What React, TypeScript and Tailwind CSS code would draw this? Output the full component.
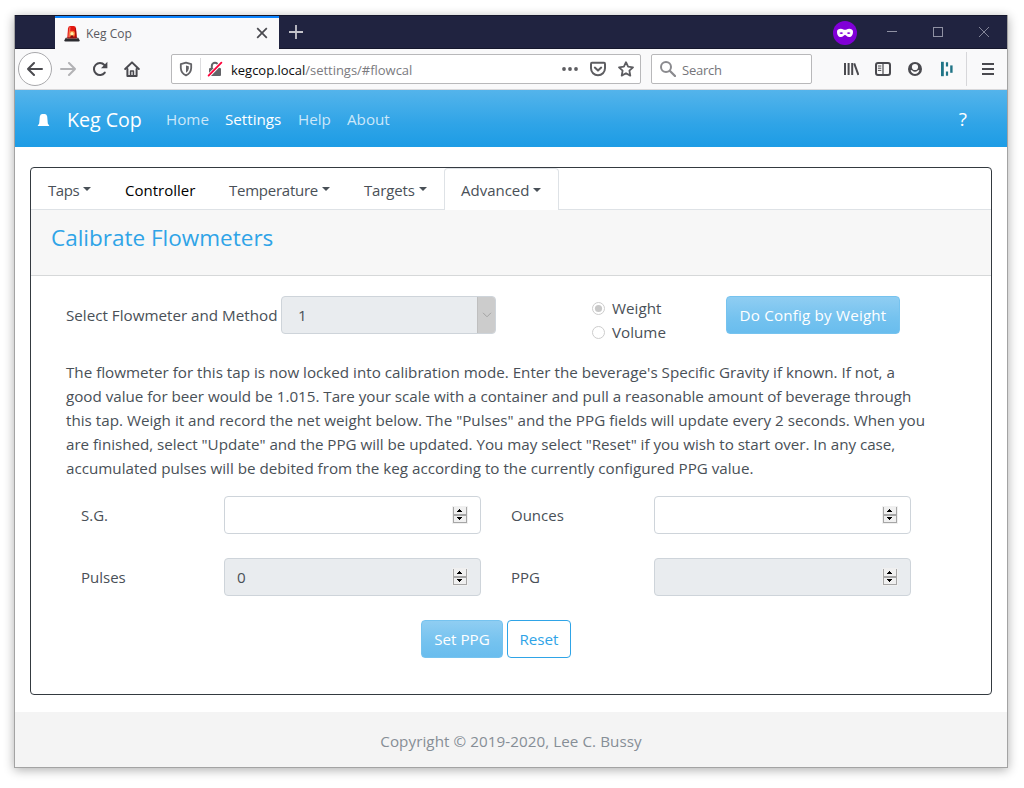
import React from "react";

const ink = "#4a4a4f";

function Siren() {
  return (
    <svg width="16" height="18" viewBox="0 0 16 18">
      <path d="M3.2 14 L4 3.4 Q4.3 1 6.5 1 H9.5 Q11.7 1 12 3.4 L12.8 14 Z" fill="#e3170f" />
      <path d="M4.2 13 L5 3.4 Q5.2 1.8 6.5 1.8 L6 13 Z" fill="#f4695c" />
      <path d="M11 2.4 Q12 3 12.2 6 L12.8 14 H11.2 Z" fill="#a30d0a" />
      <circle cx="8" cy="8.7" r="3" fill="#f9803a" />
      <circle cx="8" cy="8.7" r="1.7" fill="#fff0a8" />
      <path d="M6.2 13.6 L7 10.5 H9 L9.8 13.6 Z" fill="#7c1010" />
      <path d="M1.8 12.8 H14.2 L15.8 15.6 Q15.6 16.6 14.6 16.6 H1.4 Q.4 16.6 .2 15.6 Z" fill="#2c2c30" />
      <path d="M2.6 13 H13.4 L13.8 14 H2.2 Z" fill="#77706f" />
      <path d="M3.6 12.4 H12.4 V13.4 H3.6 Z" fill="#a5120e" />
    </svg>
  );
}

function TitleBar() {
  return (
    <div className="flex h-[34px] bg-[#202340] border-t border-b border-[#15172c]">
      <div className="ml-[40px] flex h-[34px] w-[224px] shrink-0 items-center border-t-2 border-[#0a84ff] bg-[#f9f9fa] pl-[9px] pr-[11px]">
        <Siren />
        <span className="ml-[6px] text-[12px] text-[#5a5a60]">Keg Cop</span>
        <svg className="mb-[2px] ml-auto" width="12" height="12" viewBox="0 0 12 12" stroke="#4a4a4f" strokeWidth="1.7" fill="none">
          <path d="M1.2 1.2 L10.8 10.8 M10.8 1.2 L1.2 10.8" />
        </svg>
      </div>
      <svg className="ml-[10px] mt-[9px]" width="14" height="14" viewBox="0 0 14 14" stroke="#c4c4cb" strokeWidth="1.8">
        <path d="M7 0 V14 M0 7 H14" />
      </svg>
      <div className="ml-auto flex items-center">
        <svg className="mt-[2px]" width="24" height="24" viewBox="0 0 24 24">
          <circle cx="12" cy="12" r="12" fill="#8000d7" />
          <path fillRule="evenodd" fill="#fff" d="M4 10.7 C4 7.6 8.2 7.2 10.4 8.4 Q12 9.2 13.6 8.4 C15.8 7.2 20 7.6 20 10.7 C20 13.8 18.6 16.1 16.2 16.1 C13.8 16.1 13.2 14.1 12 14.1 C10.8 14.1 10.2 16.1 7.8 16.1 C5.4 16.1 4 13.8 4 10.7 Z M6.4 12.1 Q8.3 13.9 10.2 12.1 Q8.3 10.2 6.4 12.1 Z M13.8 12.1 Q15.7 13.9 17.6 12.1 Q15.7 10.2 13.8 12.1 Z" />
        </svg>
        <svg className="ml-[30px]" width="10" height="10" viewBox="0 0 10 10" stroke="#8f91a3">
          <path d="M0 4.5 H10" />
        </svg>
        <svg className="ml-[36px]" width="10" height="10" viewBox="0 0 10 10" stroke="#8f91a3" fill="none">
          <rect x=".5" y=".5" width="9" height="9" />
        </svg>
        <svg className="ml-[36px] mr-[18px]" width="10" height="10" viewBox="0 0 10 10" stroke="#8f91a3" strokeWidth=".9">
          <path d="M0 0 L10 10 M10 0 L0 10" />
        </svg>
      </div>
    </div>
  );
}

function Icon({ children, className = "" }: { children: React.ReactNode; className?: string }) {
  return (
    <svg className={"shrink-0 " + className} width="16" height="16" viewBox="0 0 16 16" fill="none" stroke={ink} strokeWidth="2" strokeLinecap="round" strokeLinejoin="round">
      {children}
    </svg>
  );
}

function Toolbar() {
  return (
    <div className="flex h-[41px] items-center border-b border-[#d8d8da] bg-[#f9f9fa]">
      <div className="ml-[3px] flex h-[34px] w-[34px] shrink-0 items-center justify-center rounded-full border border-[#a9a9ac] bg-white">
        <Icon><path d="M1 8 H15 M7 2 L1 8 L7 14" /></Icon>
      </div>
      <Icon className="ml-[8px] opacity-40"><path d="M1 8 H15 M9 2 L15 8 L9 14" /></Icon>
      <Icon className="ml-[16px]">
        <path d="M12.8 11.6 A6 6 0 1 1 12.4 4" />
        <path d="M15.4 .8 V7.2 H9 Z" fill={ink} stroke="none" />
      </Icon>
      <Icon className="ml-[16px]">
        <path d="M1.2 8 L8 1.4 L14.8 8" />
        <path d="M3.4 8 V15 H12.6 V8" />
        <path d="M6.6 15 V10 H9.4 V15" strokeWidth="1.6" />
      </Icon>
      <div className="ml-[31px] flex h-[30px] w-[470px] shrink-0 items-center rounded-[2px] border border-[#b8b8ba] bg-white">
        <Icon className="ml-[6px]">
          <path d="M8 1.7 L13.2 3.2 V7 Q13 12 8 14.4 Q3 12 2.8 7 V3.2 Z" strokeWidth="1.8" stroke="#636367" />
          <path d="M8 4.4 L5.2 5.3 V7.4 Q5.4 10.4 8 11.8 Z" fill="#636367" stroke="none" transform="translate(16 0) scale(-1 1)" />
        </Icon>
        <div className="ml-[6px] h-[22px] w-px bg-[#dcdcde]" />
        <Icon className="ml-[6px]">
          <path d="M4.8 8 V5 A3.2 3.2 0 0 1 11.2 5 V8" stroke="#636367" />
          <rect x="2" y="7" width="12" height="8" rx="1" fill="#636367" stroke="none" />
          <path d="M1 15.5 L14.5 1.5" stroke="#fff" strokeWidth="3.6" />
          <path d="M1.6 14.6 L14.4 1.6" stroke="#ff0039" strokeWidth="1.8" />
        </Icon>
        <span className="ml-[8px] mt-[3px] text-[13px] tracking-[-0.02px] whitespace-nowrap text-[#7b7b80]">
          <span className="text-[#0c0c0d]">kegcop.local</span>/settings/#flowcal
        </span>
        <Icon className="ml-auto">
          <g fill="#5d5d61" stroke="none"><circle cx="2" cy="8" r="1.9" /><circle cx="8" cy="8" r="1.9" /><circle cx="14" cy="8" r="1.9" /></g>
        </Icon>
        <Icon className="ml-[12px]">
          <path d="M2 1.8 H14 Q15 1.8 15 3 V7.3 A7 7 0 0 1 1 7.3 V3 Q1 1.8 2 1.8 Z" stroke="#5d5d61" />
          <path d="M4.8 6.6 L8 9.6 L11.2 6.6" stroke="#5d5d61" />
        </Icon>
        <Icon className="ml-[12px] mr-[6px]">
          <path d="M8 1.2 L10.1 5.7 L15 6.3 L11.4 9.7 L12.3 14.6 L8 12.2 L3.7 14.6 L4.6 9.7 L1 6.3 L5.9 5.7 Z" stroke="#5d5d61" strokeWidth="1.8" />
        </Icon>
      </div>
      <div className="ml-[10px] flex h-[30px] w-[161px] shrink-0 items-center rounded-[2px] border border-[#b8b8ba] bg-white">
        <Icon className="ml-[8px]">
          <circle cx="6" cy="6" r="5" stroke="#8a8a8e" />
          <path d="M10 10 L15 15" stroke="#8a8a8e" strokeWidth="2.3" />
        </Icon>
        <span className="ml-[6px] mt-[3px] text-[13px] tracking-[-0.25px] text-[#75757a]">Search</span>
      </div>
      <Icon className="ml-[31px]">
        <path d="M2 2 V14 M5.6 2 V14 M9.2 2 V14" strokeLinecap="butt" />
        <path d="M11.2 2.4 L15.4 14" strokeLinecap="butt" />
      </Icon>
      <Icon className="ml-[16px]">
        <rect x="1" y="2" width="14" height="12" rx="2" />
        <path d="M8 2 V14" strokeWidth="1.2" />
        <path d="M3.3 5 H5.9 M3.3 7.2 H5.9 M3.3 9.4 H5.9" strokeWidth="1" />
      </Icon>
      <Icon className="ml-[16px]">
        <circle cx="8" cy="8" r="7" fill={ink} stroke="none" />
        <circle cx="8" cy="6" r="3.1" fill="#f9f9fa" stroke="none" />
        <path d="M3.6 9.2 Q4.6 8.8 5.2 9.6 Q8 12 10.8 9.6 Q11.4 8.8 12.4 9.2 Q11.2 13 8 13 Q4.8 13 3.6 9.2 Z" fill="#f9f9fa" stroke="none" />
      </Icon>
      <Icon className="ml-[16px]">
        <g stroke="#207486" strokeLinecap="butt">
          <path d="M3.4 .8 V15.2" strokeWidth="2.8" />
          <path d="M8 1.2 V5.4 M8 10.4 V14.8" strokeWidth="2.2" />
          <path d="M12.4 4.4 V11.8" strokeWidth="2.4" />
        </g>
      </Icon>
      <div className="ml-[11px] h-[34px] w-px bg-[#d7d7da]" />
      <Icon className="ml-[13px]">
        <path d="M2 3 H14 M2 8 H14 M2 13 H14" strokeLinecap="butt" />
      </Icon>
    </div>
  );
}

function NavBar() {
  return (
    <nav className="flex h-[57px] items-center bg-[linear-gradient(#54b4eb,#2fa4e7_60%,#1d9ce5)] pt-[2px] text-[15.2px] text-white/75">
      <svg className="ml-[22px]" width="13" height="14" viewBox="0 0 13 14" fill="#fff">
        <path d="M2.2 10.4 L2.8 3.6 Q3.2 1 5 1 H8 Q9.8 1 10.2 3.6 L10.8 10.4 L12.4 13 H.6 Z" />
      </svg>
      <span className="ml-[17px] w-[99px] text-[19.6px] whitespace-nowrap text-white">Keg Cop</span>
      <span className="w-[59px]">Home</span>
      <span className="w-[73px] text-white">Settings</span>
      <span className="w-[49px]">Help</span>
      <span>About</span>
      <span className="ml-auto mr-[40px] text-[19px] text-white">?</span>
    </nav>
  );
}

function Caret() {
  return (
    <svg className="mb-[-1px] ml-[4px] shrink-0" width="8" height="8" viewBox="0 0 8 8" fill="#495057">
      <path d="M0 1 H8 L4 5 Z" />
    </svg>
  );
}

function Tabs() {
  return (
    <div className="flex h-[42px] border-b border-[#dee2e6] text-[15px] leading-[24px] text-[#495057]">
      <div className="flex w-[77px] items-center pl-[17px] pt-[2px] tracking-[-0.4px]">Taps<Caret /></div>
      <div className="flex w-[104px] items-center pl-[17px] pt-[2px] text-black">Controller</div>
      <div className="flex w-[135px] items-center pl-[17px] pt-[2px] tracking-[-0.25px]">Temperature<Caret /></div>
      <div className="flex w-[97px] items-center pl-[17px] pt-[2px] tracking-[-0.15px]">Targets<Caret /></div>
      <div className="flex h-[42px] w-[115px] items-center rounded-t-[4px] border border-b-0 border-[#dee2e6] bg-white pl-[16px] pt-[1px]">Advanced<Caret /></div>
    </div>
  );
}

function Spinner() {
  return (
    <svg width="16" height="18" viewBox="0 0 16 18" shapeRendering="crispEdges">
      <rect width="16" height="18" fill="#f0f0f0" />
      <path d="M1 1 H2 V17 H1 Z M14 1 H15 V17 H14 Z M1 8 H15 V10 H1 Z M1 16 H15 V17 H1 Z" fill="#a6a6a6" />
      <path d="M7 3 H8 V4 H9 V5 H10 V6 H5 V5 H6 V4 H7 Z M5 11 H10 V12 H9 V13 H8 V14 H7 V13 H6 V12 H5 Z" fill="#000" />
    </svg>
  );
}

function Field({ label, value = "", disabled = false }: { label: string; value?: string; disabled?: boolean }) {
  return (
    <div className="flex w-[430px] items-center">
      <span className="w-[143px] text-[15px]">{label}</span>
      <div className={"flex h-[38px] w-[257px] items-center rounded-[4px] border border-[#ced4da] pl-[12px] pr-[12px] " + (disabled ? "bg-[#e9ecef]" : "bg-white")}>
        <span>{value}</span>
        <span className="ml-auto"><Spinner /></span>
      </div>
    </div>
  );
}

function Radio({ label, checked = false }: { label: string; checked?: boolean }) {
  return (
    <div className="flex h-[24px] items-center">
      <svg width="13" height="13" viewBox="0 0 13 13" fill="none">
        <circle cx="6.5" cy="6.5" r="6" stroke="#cccccc" fill="#fff" />
        {checked && <circle cx="6.5" cy="6.5" r="3.6" fill="#c8c8c8" />}
      </svg>
      <span className="ml-[7px]">{label}</span>
    </div>
  );
}

const primary = "flex h-[38px] items-center justify-center rounded-[4px] border border-[#76c3ef] bg-[linear-gradient(#8fcdf2,#74c2ef_60%,#69bdee)] pt-[1px] whitespace-nowrap text-white";

export default function App() {
  return (
    <div className="flex h-[788px] w-[1024px] bg-white font-['Open_Sans','Noto_Sans',sans-serif] text-[15.2px]">
      <div className="ml-[14px] mt-[15px] flex h-[753px] w-[994px] flex-col border-x border-b border-[#a3a3a3] bg-white shadow-[0_2px_10px_rgba(0,0,0,0.32)]">
        <TitleBar />
        <Toolbar />
        <NavBar />
        <main className="mx-[15px] mt-[20px] h-[528px] shrink-0 overflow-hidden rounded-[4px] border border-[#343a40] text-[#495057]">
          <Tabs />
          <div className="h-[66px] border-b border-[#d6d8d9] bg-[#f7f7f7] pl-[20px] pt-[12px] text-[22.5px] leading-[32px] text-[#2fa4e7]">Calibrate Flowmeters</div>
          <div className="pl-[35px] pt-[20px]">
            <div className="flex h-[48px] items-start">
              <span className="flex h-[38px] w-[215px] items-center pt-[1px] whitespace-nowrap">Select Flowmeter and Method</span>
              <div className="flex h-[38px] w-[215px] overflow-hidden rounded-[4px] border border-[#ced4da] bg-[#e9ecef]">
                <span className="flex flex-1 items-center pl-[16px] pt-[1px]">1</span>
                <span className="flex w-[18px] items-center justify-center border-l border-[#bfbfbf] bg-[#cccccc]">
                  <svg width="10" height="6" viewBox="0 0 10 6" fill="none" stroke="#a3a3a3"><path d="M1 .8 L5 4.8 L9 .8" /></svg>
                </span>
              </div>
              <div className="ml-[96px] w-[134px]">
                <Radio label="Weight" checked />
                <Radio label="Volume" />
              </div>
              <div className={primary + " w-[174px] tracking-[0.18px]"}>Do Config by Weight</div>
            </div>
            <p className="mt-[16px] leading-[24px] whitespace-nowrap">
              The flowmeter for this tap is now locked into calibration mode. Enter the beverage's Specific Gravity if known. If not, a<br />
              <span className="tracking-[-0.02px]">good value for beer would be 1.015. Tare your scale with a container and pull a reasonable amount of beverage through</span><br />
              <span className="tracking-[0.01px]">this tap. Weigh it and record the net weight below. The "Pulses" and the PPG fields will update every 2 seconds. When you</span><br />
              <span className="tracking-[-0.03px]">are finished, select "Update" and the PPG will be updated. You may select "Reset" if you wish to start over. In any case,</span><br />
              accumulated pulses will be debited from the keg according to the currently configured PPG value.
            </p>
            <div className="ml-[15px] mt-[16px] grid w-[860px] grid-cols-2 gap-y-[24px]">
              <Field label="S.G." />
              <Field label="Ounces" />
              <Field label="Pulses" value="0" disabled />
              <Field label="PPG" disabled />
            </div>
            <div className="ml-[355px] mt-[24px] flex gap-[4px]">
              <div className={primary + " w-[82px]"}>Set PPG</div>
              <div className="flex h-[38px] w-[64px] items-center justify-center rounded-[4px] border border-[#2fa4e7] pt-[1px] text-[#2fa4e7]">Reset</div>
            </div>
          </div>
        </main>
        <footer className="mt-[17px] flex flex-1 items-center justify-center bg-[#f4f4f4] pt-[4px] tracking-[0.07px] text-[#868e96]">Copyright © 2019-2020, Lee C. Bussy</footer>
      </div>
    </div>
  );
}
